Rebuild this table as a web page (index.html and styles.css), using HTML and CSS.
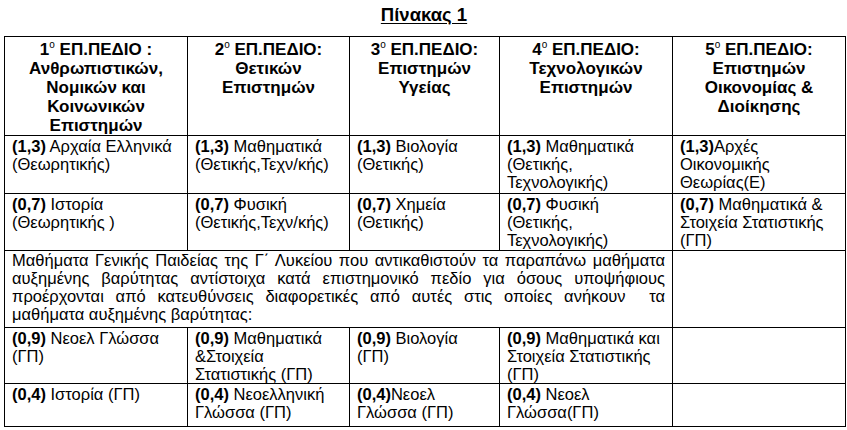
FILE: index.html
```html
<!DOCTYPE html>
<html lang="el">
<head>
<meta charset="utf-8">
<title>Πίνακας 1</title>
<link rel="stylesheet" href="styles.css">
</head>
<body>
<div class="title"><span>Πίνακας 1</span></div>
<table class="grid">
  <colgroup>
    <col class="c1"><col class="c2"><col class="c3"><col class="c4"><col class="c5">
  </colgroup>
  <tr class="head">
    <th>1<sup class="deg">o</sup> ΕΠ.ΠΕΔΙΟ :<br>Ανθρωπιστικών,<br>Νομικών και<br>Κοινωνικών<br>Επιστημών</th>
    <th>2<sup class="deg">o</sup> ΕΠ.ΠΕΔΙΟ:<br>Θετικών<br>Επιστημών</th>
    <th>3<sup class="deg">o</sup> ΕΠ.ΠΕΔΙΟ:<br>Επιστημών<br>Υγείας</th>
    <th>4<sup class="deg">o</sup> ΕΠ.ΠΕΔΙΟ:<br>Τεχνολογικών<br>Επιστημών</th>
    <th>5<sup class="deg">o</sup> ΕΠ.ΠΕΔΙΟ:<br>Επιστημών<br>Οικονομίας &amp;<br>Διοίκησης</th>
  </tr>
  <tr class="r1">
    <td><b>(1,3)</b> Αρχαία Ελληνικά<br>(Θεωρητικής)</td>
    <td><b>(1,3)</b> Μαθηματικά<br>(Θετικής,Τεχν/κής)</td>
    <td><b>(1,3)</b> Βιολογία<br>(Θετικής)</td>
    <td><b>(1,3)</b> Μαθηματικά<br>(Θετικής,<br>Τεχνολογικής)</td>
    <td><b>(1,3)</b>Αρχές<br>Οικονομικής<br>Θεωρίας(Ε)</td>
  </tr>
  <tr class="r2">
    <td><b>(0,7)</b> Ιστορία<br>(Θεωρητικής )</td>
    <td><b>(0,7)</b> Φυσική<br>(Θετικής,Τεχν/κής)</td>
    <td><b>(0,7)</b> Χημεία<br>(Θετικής)</td>
    <td><b>(0,7)</b> Φυσική<br>(Θετικής,<br>Τεχνολογικής)</td>
    <td><b>(0,7)</b> Μαθηματικά &amp;<br>Στοιχεία Στατιστικής<br>(ΓΠ)</td>
  </tr>
  <tr class="r3">
    <td colspan="4" class="note">
      <span class="jl">Μαθήματα Γενικής Παιδείας της Γ΄ Λυκείου που αντικαθιστούν τα παραπάνω μαθήματα</span>
      <span class="jl">αυξημένης βαρύτητας αντίστοιχα κατά επιστημονικό πεδίο για όσους υποψήφιους</span>
      <span class="jl">προέρχονται από κατευθύνσεις διαφορετικές από αυτές στις οποίες ανήκουν &nbsp;τα</span>
      <span class="ll">μαθήματα αυξημένης βαρύτητας:</span>
    </td>
    <td></td>
  </tr>
  <tr class="r4">
    <td><b>(0,9)</b> Νεοελ Γλώσσα<br>(ΓΠ)</td>
    <td><b>(0,9)</b> Μαθηματικά<br>&amp;Στοιχεία<br>Στατιστικής (ΓΠ)</td>
    <td><b>(0,9)</b> Βιολογία<br>(ΓΠ)</td>
    <td><b>(0,9)</b> Μαθηματικά και<br>Στοιχεία Στατιστικής<br>(ΓΠ)</td>
    <td></td>
  </tr>
  <tr class="r5">
    <td><b>(0,4)</b> Ιστορία (ΓΠ)</td>
    <td><b>(0,4)</b> Νεοελληνική<br>Γλώσσα (ΓΠ)</td>
    <td><b>(0,4)</b>Νεοελ<br>Γλώσσα (ΓΠ)</td>
    <td><b>(0,4)</b> Νεοελ<br>Γλώσσα(ΓΠ)</td>
    <td></td>
  </tr>
</table>
</body>
</html>
```
FILE: styles.css
```css
html, body {
  margin: 0;
  padding: 0;
  background: #ffffff;
}
body {
  font-family: "Liberation Sans", Arial, sans-serif;
  color: #000000;
  width: 847px;
}
.title {
  width: 848px;
  height: 36px;
  box-sizing: border-box;
  padding-top: 4px;
  text-align: center;
  font-weight: bold;
  font-size: 18.5px;
  line-height: 22px;
}
.title span {
  text-decoration: underline;
  text-underline-offset: 2px;
}
.grid {
  margin-left: 4px;
  border-collapse: collapse;
  table-layout: fixed;
  width: 841px;
  font-size: 16.5px;
  line-height: 18px;
}
.c1 { width: 183px; }
.c2 { width: 162px; }
.c3 { width: 150px; }
.c4 { width: 173px; }
.c5 { width: 173px; }
.grid th, .grid td {
  border: 1px solid #000000;
  vertical-align: top;
  padding: 0 7px;
  text-align: left;
  font-weight: normal;
}
.grid th {
  text-align: center;
  font-weight: bold;
  font-size: 17px;
  line-height: 19px;
  padding-top: 3px;
}
.deg {
  font-size: 10px;
  line-height: 0;
  vertical-align: 7px;
  font-weight: normal;
}
.head { height: 99px; }
.r1 { height: 58px; }
.r2 { height: 57px; }
.r3 { height: 77px; }
.r4 { height: 56px; }
.r5 { height: 43px; }
.r1 td, .r2 td, .r4 td, .r5 td { padding-top: 1px; }
.note {
  padding-right: 14px;
  padding-top: 2px;
}
.jl {
  display: block;
  text-align: justify;
  text-align-last: justify;
}
.ll {
  display: block;
  text-align: left;
}
```
